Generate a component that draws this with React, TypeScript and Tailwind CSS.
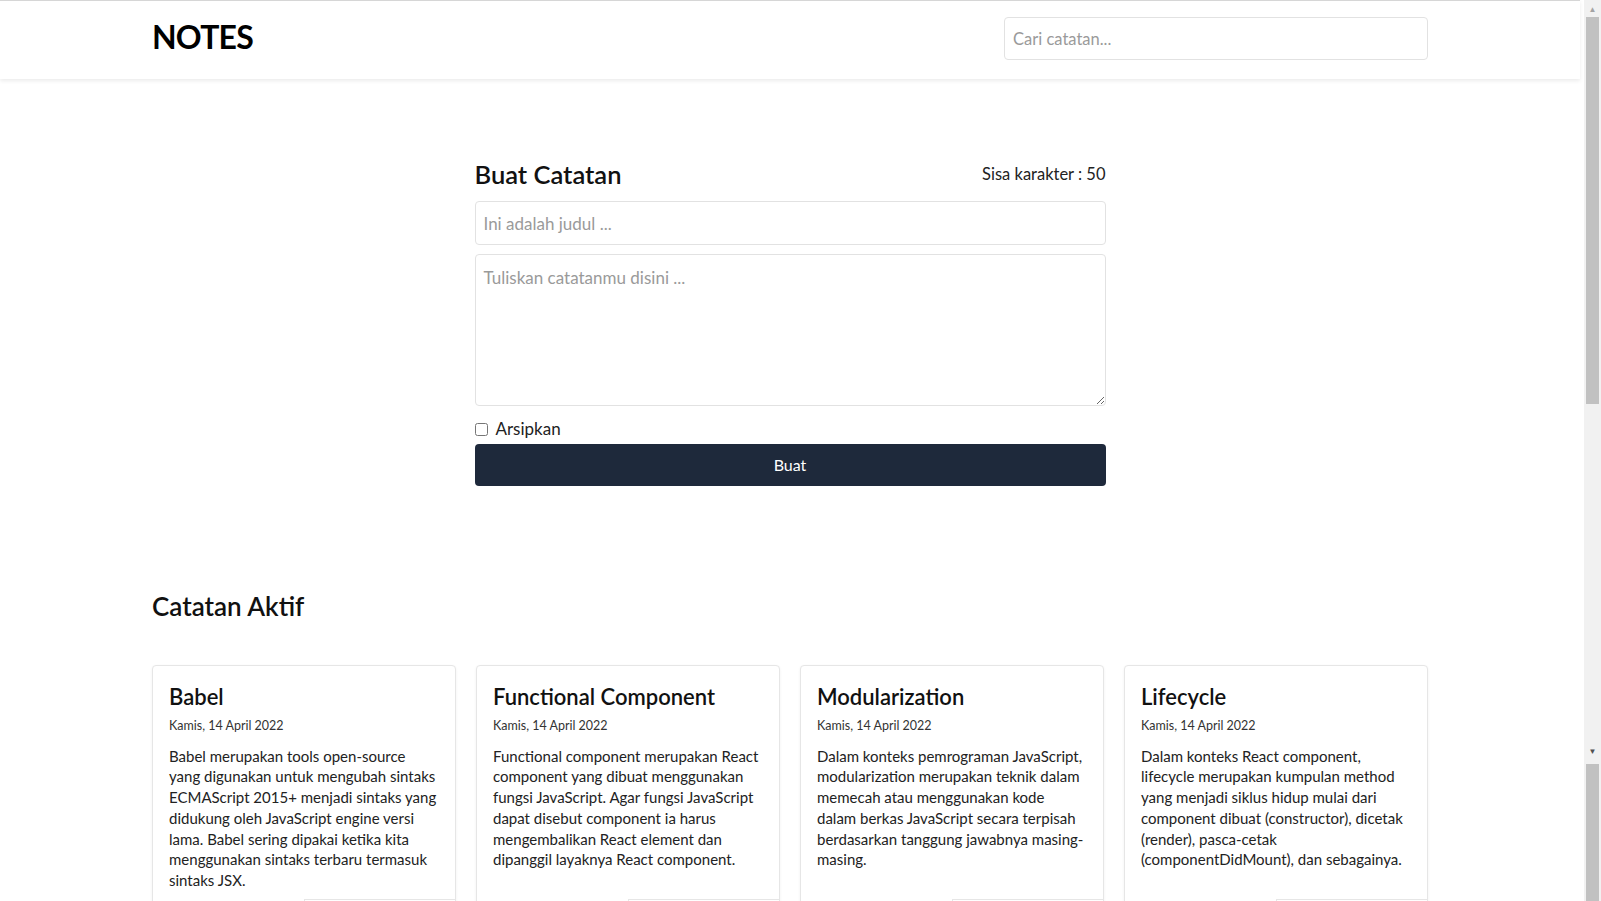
import { useState } from "react";

type Note = {
  id: number;
  title: string;
  createdAt: string;
  body: string;
};

const initialNotes: Note[] = [
  {
    id: 1,
    title: "Babel",
    createdAt: "Kamis, 14 April 2022",
    body: "Babel merupakan tools open-source yang digunakan untuk mengubah sintaks ECMAScript 2015+ menjadi sintaks yang didukung oleh JavaScript engine versi lama. Babel sering dipakai ketika kita menggunakan sintaks terbaru termasuk sintaks JSX.",
  },
  {
    id: 2,
    title: "Functional Component",
    createdAt: "Kamis, 14 April 2022",
    body: "Functional component merupakan React component yang dibuat menggunakan fungsi JavaScript. Agar fungsi JavaScript dapat disebut component ia harus mengembalikan React element dan dipanggil layaknya React component.",
  },
  {
    id: 3,
    title: "Modularization",
    createdAt: "Kamis, 14 April 2022",
    body: "Dalam konteks pemrograman JavaScript, modularization merupakan teknik dalam memecah atau menggunakan kode dalam berkas JavaScript secara terpisah berdasarkan tanggung jawabnya masing-masing.",
  },
  {
    id: 4,
    title: "Lifecycle",
    createdAt: "Kamis, 14 April 2022",
    body: "Dalam konteks React component, lifecycle merupakan kumpulan method yang menjadi siklus hidup mulai dari component dibuat (constructor), dicetak (render), pasca-cetak (componentDidMount), dan sebagainya.",
  },
];

// fake browser scrollbar, the reference was captured with one visible
function Scrollbar() {
  return (
    <div className="pointer-events-none fixed top-0 right-0 flex h-[901px] w-[17px] flex-col bg-[#f1f1f1]">
      <div className="flex h-[17px] items-center justify-center text-[8px] leading-none text-[#a3a3a3]">▲</div>
      <div className="mx-[2px] h-[387px] bg-[#c1c1c1]" />
      <div className="mt-[341px] flex h-[12px] items-center justify-center text-[8px] leading-none text-[#505050]">▼</div>
      <div className="mx-[2px] mt-[7px] flex-1 bg-[#c1c1c1]" />
    </div>
  );
}

function Header() {
  return (
    <header className="border-t border-[#d6d6d6] bg-white shadow-[0_2px_4px_rgba(0,0,0,0.08)]">
      <div className="mx-auto flex h-[78px] w-[1276px] items-center justify-between">
        <h1 className="-mt-[7px] text-[32px] font-bold tracking-tight text-black">NOTES</h1>
        <input
          type="text"
          placeholder="Cari catatan..."
          className="-mt-[3px] h-[43px] w-[424px] rounded border border-[#e2e2e2] px-2 text-[16.5px] text-gray-800 outline-none placeholder:text-[#9a9a9a]"
        />
      </div>
    </header>
  );
}

function NoteInput() {
  const [title, setTitle] = useState("");
  const [body, setBody] = useState("");
  const [archived, setArchived] = useState(false);

  return (
    <form className="mx-auto w-[631px]" onSubmit={(e) => e.preventDefault()}>
      <div className="flex items-center justify-between">
        <h2 className="text-[25.5px] font-semibold text-[#111]">Buat Catatan</h2>
        <p className="text-[16.5px] text-[#222]">Sisa karakter : {50 - title.length}</p>
      </div>
      <input
        value={title}
        onChange={(e) => setTitle(e.target.value.slice(0, 50))}
        placeholder="Ini adalah judul ..."
        className="mt-2 h-[44px] w-full rounded border border-[#e2e2e2] px-2 text-[17px] outline-none placeholder:text-[#9a9a9a]"
      />
      <textarea
        value={body}
        onChange={(e) => setBody(e.target.value)}
        placeholder="Tuliskan catatanmu disini ..."
        className="mt-[9px] block h-[152px] w-full rounded border border-[#e2e2e2] px-2 py-2.5 text-[17px] outline-none placeholder:text-[#9a9a9a]"
      />
      <label className="mt-[10px] flex items-center gap-2 text-[17px] text-[#222]">
        <input
          type="checkbox"
          checked={archived}
          onChange={(e) => setArchived(e.target.checked)}
          className="h-[13px] w-[13px]"
        />
        Arsipkan
      </label>
      <button
        type="submit"
        className="mt-0.5 h-[42px] w-full rounded bg-[#1e293b] text-[16px] text-white"
      >
        Buat
      </button>
    </form>
  );
}

function NoteItem({ note }: { note: Note }) {
  return (
    <article className="flex flex-col rounded border border-[#e6e6e6] bg-white shadow-[0_1px_3px_rgba(0,0,0,0.06)]">
      <div className="px-4 pt-[15px] pb-2">
        <h3 className="text-[22px] font-semibold leading-[32px] text-[#111]">{note.title}</h3>
        <p className="mt-1 text-[12.5px] text-[#333]">{note.createdAt}</p>
        <p className="mt-[10px] text-[15px] leading-[20.8px] text-[#222]">{note.body}</p>
      </div>
      <div className="mt-auto flex">
        <button className="h-[42px] flex-1 text-[15px] text-red-600">Hapus</button>
        <button className="h-[42px] flex-1 border-t border-l border-[#e6e6e6] text-[15px] text-[#1e293b]">
          Arsipkan
        </button>
      </div>
    </article>
  );
}

export default function App() {
  return (
    <div className="min-h-screen bg-white pr-[21px] font-['Lato',sans-serif] text-[#222]">
      <Header />
      <main className="pb-16">
        <section className="pt-[76px]">
          <NoteInput />
        </section>
        <section className="mx-auto mt-[101px] w-[1276px]">
          <h2 className="text-[26px] font-semibold text-[#111]">Catatan Aktif</h2>
          <div className="mt-[39px] grid grid-cols-4 gap-5">
            {initialNotes.map((note) => (
              <NoteItem key={note.id} note={note} />
            ))}
          </div>
        </section>
      </main>
      <Scrollbar />
    </div>
  );
}
